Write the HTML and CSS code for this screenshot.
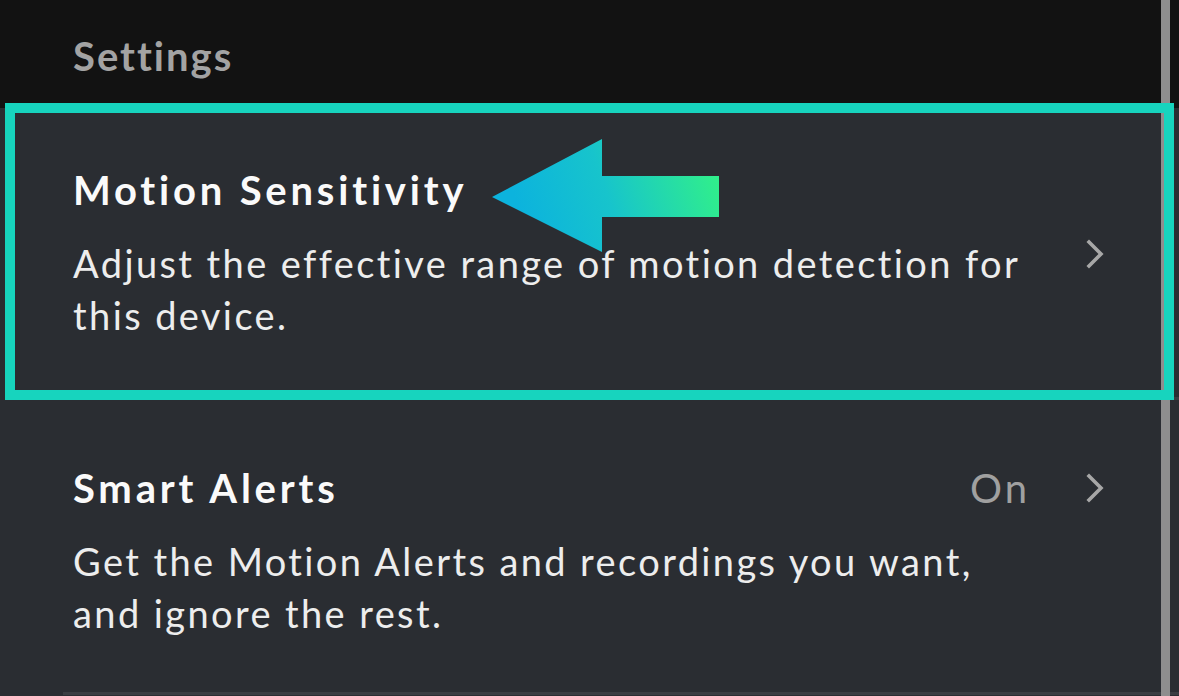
FILE: index.html
```html
<!DOCTYPE html>
<html lang="en">
<head>
<meta charset="utf-8">
<title>Settings</title>
<link rel="stylesheet" href="styles.css">
</head>
<body>
<div class="screen">
  <header class="section-header">
    <h2 class="section-title">Settings</h2>
  </header>
  <ul class="list">
    <li class="row row--first">
      <div class="row-body">
        <div class="row-head">
          <span class="row-title">Motion Sensitivity</span>
        </div>
        <p class="row-desc">Adjust the effective range of motion detection for this device.</p>
      </div>
      <svg class="chevron" viewBox="0 0 24 32" width="24" height="32" aria-hidden="true">
        <polyline points="6,4 18,16 6,28" fill="none" stroke="currentColor" stroke-width="3.6" stroke-linecap="square" stroke-linejoin="miter"/>
      </svg>
    </li>
    <li class="row row--top">
      <div class="row-body">
        <div class="row-head">
          <span class="row-title">Smart Alerts</span>
          <span class="row-value">On</span>
        </div>
        <p class="row-desc">Get the Motion Alerts and recordings you want, and ignore the rest.</p>
      </div>
      <svg class="chevron" viewBox="0 0 24 32" width="24" height="32" aria-hidden="true">
        <polyline points="6,4 18,16 6,28" fill="none" stroke="currentColor" stroke-width="3.6" stroke-linecap="square" stroke-linejoin="miter"/>
      </svg>
    </li>
  </ul>

  <div class="scrollbar" aria-hidden="true"></div>
  <div class="highlight" aria-hidden="true"></div>
  <svg class="pointer" viewBox="0 0 232 116" width="232" height="116" aria-hidden="true">
    <defs>
      <linearGradient id="arrowGrad" gradientUnits="userSpaceOnUse" x1="40" y1="105" x2="226" y2="42">
        <stop offset="0" stop-color="#0cb3dd"/>
        <stop offset="0.45" stop-color="#17c4cc"/>
        <stop offset="1" stop-color="#30ee8c"/>
      </linearGradient>
    </defs>
    <polygon points="2,59 112,1 112,38 229,38 229,79 112,79 112,114" fill="url(#arrowGrad)"/>
  </svg>
</div>
</body>
</html>
```
FILE: styles.css
```css
* {
  box-sizing: border-box;
}

html, body {
  margin: 0;
  padding: 0;
}

body {
  width: 1179px;
  height: 696px;
  overflow: hidden;
  background: #2a2d32;
  font-family: Lato, "Noto Sans", sans-serif;
  -webkit-font-smoothing: antialiased;
}

.screen {
  position: relative;
  width: 1179px;
  height: 696px;
  overflow: hidden;
}

.section-header {
  height: 108px;
  background: #121212;
  padding: 32px 0 0 73px;
}

.section-title {
  margin: 0;
  font-size: 40px;
  line-height: 48px;
  font-weight: 700;
  color: #a3a3a3;
  letter-spacing: 2px;
}

.list {
  list-style: none;
  margin: 0;
  padding: 0;
}

.row {
  display: flex;
  align-items: center;
  gap: 56px;
  margin-left: 63px;
  padding: 58px 72px 56px 10px;
  border-bottom: 3px solid #3a3d42;
}

.row--top {
  align-items: flex-start;
  padding-top: 64px;
  padding-bottom: 53px;
}

.row--top .chevron {
  margin-top: 8px;
}

.row-body {
  flex: 1;
  min-width: 0;
}

.row-head {
  display: flex;
  align-items: baseline;
  justify-content: space-between;
  height: 48px;
}

.row-title {
  font-size: 40px;
  line-height: 48px;
  font-weight: 700;
  color: #fafafa;
  letter-spacing: 3.8px;
}

.row-value {
  font-size: 40px;
  line-height: 48px;
  font-weight: 400;
  color: #a0a0a0;
  letter-spacing: 3px;
  margin-right: -3px;
}

.row-desc {
  margin: 23px 0 0;
  max-width: 965px;
  font-size: 38px;
  line-height: 52px;
  font-weight: 400;
  color: #ededed;
  letter-spacing: 2.4px;
}

.chevron {
  flex: none;
  color: #a7a7a7;
}

.scrollbar {
  position: absolute;
  top: 0;
  bottom: 0;
  left: 1161px;
  width: 9px;
  background: #8e8e8e;
}

.highlight {
  position: absolute;
  left: 5px;
  top: 103px;
  width: 1169px;
  height: 297px;
  border: 10px solid #17d4be;
}

.pointer {
  position: absolute;
  left: 490px;
  top: 138px;
}
```
